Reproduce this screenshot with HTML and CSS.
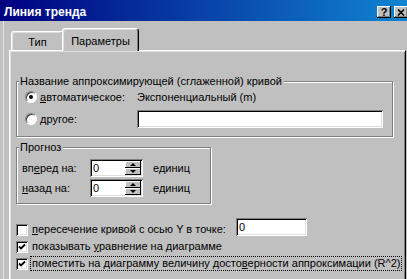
FILE: index.html
```html
<!DOCTYPE html>
<html lang="ru">
<head>
    <meta charset="UTF-8">
    <meta name="viewport" content="width=device-width, initial-scale=1.0">
    <title>Линия тренда</title>
    <link rel="stylesheet" href="styles.css">
</head>
<body>
    <div class="window">
        <div class="titlebar">
            <span class="title">Линия тренда</span>
            <div class="caption-buttons">
                <span class="cap-btn help">?</span>
                <span class="cap-btn">
                    <svg width="8" height="7" viewBox="0 0 8 7"><path d="M1 0.5 L7 6.5 M7 0.5 L1 6.5" stroke="#000" stroke-width="1.6"/></svg>
                </span>
            </div>
        </div>

        <div class="client">
            <div class="tabs">
                <div class="tab">Тип</div>
                <div class="tab active">Параметры</div>
            </div>

            <div class="panel">
                <fieldset class="group name-group">
                    <legend>Название аппроксимирующей (сглаженной) кривой</legend>
                    <div class="group-body">
                        <div class="opt-row">
                            <span class="radio checked"></span>
                            <span class="opt-label"><u>а</u>втоматическое:</span>
                            <span class="opt-value">Экспоненциальный (m)</span>
                        </div>
                        <div class="opt-row">
                            <span class="radio"></span>
                            <span class="opt-label"><u>д</u>ругое:</span>
                            <span class="field wide"></span>
                        </div>
                    </div>
                </fieldset>

                <fieldset class="group forecast-group">
                    <legend>Прогноз</legend>
                    <div class="group-body">
                        <div class="spin-row">
                            <span class="spin-label">вп<u>е</u>ред на:</span>
                            <span class="spin">
                                <span class="spin-value">0</span>
                                <span class="spin-buttons">
                                    <span class="spin-btn up"></span>
                                    <span class="spin-btn down"></span>
                                </span>
                            </span>
                            <span class="unit">единиц</span>
                        </div>
                        <div class="spin-row">
                            <span class="spin-label"><u>н</u>азад на:</span>
                            <span class="spin">
                                <span class="spin-value">0</span>
                                <span class="spin-buttons">
                                    <span class="spin-btn up"></span>
                                    <span class="spin-btn down"></span>
                                </span>
                            </span>
                            <span class="unit">единиц</span>
                        </div>
                    </div>
                </fieldset>

                <div class="checks">
                    <div class="check-row">
                        <span class="checkbox"></span>
                        <span class="check-label"><u>п</u>ересечение кривой с осью Y в точке:</span>
                        <span class="field small">0</span>
                    </div>
                    <div class="check-row">
                        <span class="checkbox">
                            <svg width="12" height="12" viewBox="0 0 12 12"><path d="M3 5.5 L5 7.5 L9 3.5" fill="none" stroke="#000" stroke-width="1.8"/></svg>
                        </span>
                        <span class="check-label">показывать <u>у</u>равнение на диаграмме</span>
                    </div>
                    <div class="check-row">
                        <span class="checkbox">
                            <svg width="12" height="12" viewBox="0 0 12 12"><path d="M3 5.5 L5 7.5 L9 3.5" fill="none" stroke="#000" stroke-width="1.8"/></svg>
                        </span>
                        <span class="check-label focused">поместить на диаграмму величину досто<u>в</u>ерности аппроксимации (R^2)</span>
                    </div>
                </div>
            </div>
        </div>
    </div>
</body>
</html>
```

FILE: styles.css
```css
body {
    margin: 0;
    width: 407px;
    height: 279px;
    overflow: hidden;
    background: #c0c0c0;
    font-family: "Liberation Sans", Arial, sans-serif;
    font-size: 11px;
    color: #000;
}

.window {
    width: 407px;
}

/* caption */
.titlebar {
    height: 21px;
    box-sizing: border-box;
    padding: 3px 0 0 4px;
    display: flex;
    align-items: center;
    justify-content: space-between;
    background: linear-gradient(to right, #000080, #1084d0);
    color: #fff;
}

.title {
    font-size: 12px;
    font-weight: bold;
    line-height: 14px;
}

.caption-buttons {
    display: flex;
    gap: 3px;
    margin-right: -1px;
}

.cap-btn {
    width: 14px;
    height: 12px;
    display: flex;
    align-items: center;
    justify-content: center;
    background: #c0c0c0;
    box-shadow: inset -1px -1px #000, inset 1px 1px #fff, inset -2px -2px #808080;
    color: #000;
    font-weight: bold;
    font-size: 11px;
    line-height: 12px;
}

/* client area */
.client {
    height: 258px;
    padding: 7px 0 0 9px;
    background: linear-gradient(to right, #c0c0c0 3px, #e4e4e4 3px, #e4e4e4 4px, #c0c0c0 4px);
}

.tabs {
    display: flex;
    align-items: flex-end;
    height: 22px;
    padding-left: 2px;
}

.tab {
    height: 19px;
    box-sizing: border-box;
    width: 53px;
    padding-top: 2px;
    display: flex;
    align-items: center;
    justify-content: center;
    border: 1px solid;
    border-color: #fff #000 transparent #fff;
    border-bottom: none;
    border-radius: 3px 3px 0 0;
    box-shadow: inset -1px 0 #808080, inset 1px 1px #dfdfdf;
    background: #c0c0c0;
}

.tab.active {
    width: 77px;
    height: 23px;
    margin-left: -2px;
    margin-bottom: -1px;
    padding-top: 1px;
    position: relative;
    z-index: 1;
}

.panel {
    width: 397px;
    height: 240px;
    box-sizing: border-box;
    padding: 24px 0 0 6px;
    border: 1px solid;
    border-color: #fff #000 #000 #fff;
    box-shadow: inset 1px 1px #dfdfdf, inset -1px -1px #808080;
}

/* group boxes */
.group {
    margin: 0;
    padding: 0;
    min-inline-size: 0;
    box-sizing: border-box;
    border: 1px solid #808080;
    box-shadow: inset 1px 1px #fff, 1px 1px #fff;
}

.group legend {
    margin-left: 2px;
    padding: 0 2px 0 1px;
    line-height: 13px;
    background: #c0c0c0;
}

.name-group {
    width: 377px;
}

.name-group .group-body {
    padding: 0 8px 8px 8px;
    display: flex;
    flex-direction: column;
    gap: 4px;
}

.forecast-group {
    width: 195px;
    margin-top: 4px;
}

.forecast-group .group-body {
    padding: 5px 0 6px 5px;
    display: flex;
    flex-direction: column;
    gap: 2px;
}

.opt-row,
.spin-row {
    height: 18px;
    display: flex;
    align-items: center;
}

.radio {
    width: 12px;
    height: 12px;
    box-sizing: border-box;
    margin-right: 3px;
    border-radius: 50%;
    border: 1px solid;
    border-color: #808080 #fff #fff #808080;
    box-shadow: inset 1px 1px #404040;
    background: #fff;
    display: flex;
    align-items: center;
    justify-content: center;
}

.radio.checked::after {
    content: "";
    width: 4px;
    height: 4px;
    border-radius: 50%;
    background: #000;
}

.opt-label {
    width: 97px;
}

.field {
    height: 18px;
    box-sizing: border-box;
    background: #fff;
    box-shadow: inset 1px 1px #808080, inset -1px -1px #fff, inset 2px 2px #000, inset -2px -2px #dfdfdf;
    line-height: 18px;
}

.field.wide {
    width: 246px;
}

.field.small {
    width: 71px;
    margin-left: 8px;
    margin-top: -6px;
    padding-left: 3px;
}

/* spinners */
.spin-label {
    width: 68px;
}

.spin {
    width: 53px;
    height: 18px;
    box-sizing: border-box;
    padding: 2px;
    display: flex;
    background: #fff;
    box-shadow: inset 1px 1px #808080, inset -1px -1px #fff, inset 2px 2px #000, inset -2px -2px #dfdfdf;
}

.spin-value {
    flex: 1;
    padding-left: 1px;
    line-height: 14px;
}

.spin-buttons {
    width: 16px;
    display: flex;
    flex-direction: column;
}

.spin-btn {
    height: 7px;
    display: flex;
    align-items: center;
    justify-content: center;
    background: #c0c0c0;
    box-shadow: inset -1px -1px #000, inset 1px 1px #fff;
}

.spin-btn::after {
    content: "";
    border-left: 3px solid transparent;
    border-right: 3px solid transparent;
}

.spin-btn.up::after {
    border-bottom: 3px solid #000;
}

.spin-btn.down::after {
    border-top: 3px solid #000;
}

.unit {
    margin-left: 10px;
}

/* check boxes */
.checks {
    margin-top: 17px;
}

.check-row {
    height: 17px;
    display: flex;
    align-items: center;
}

.checkbox {
    width: 12px;
    height: 12px;
    background: #fff;
    box-shadow: inset 1px 1px #808080, inset -1px -1px #fff, inset 2px 2px #000, inset -2px -2px #dfdfdf;
}

.checkbox svg {
    display: block;
}

.check-label {
    margin-left: 2px;
    padding: 0 1px;
    line-height: 13px;
    white-space: nowrap;
    border: 1px solid transparent;
}

.check-label.focused {
    border: 1px dotted #000;
}
```
